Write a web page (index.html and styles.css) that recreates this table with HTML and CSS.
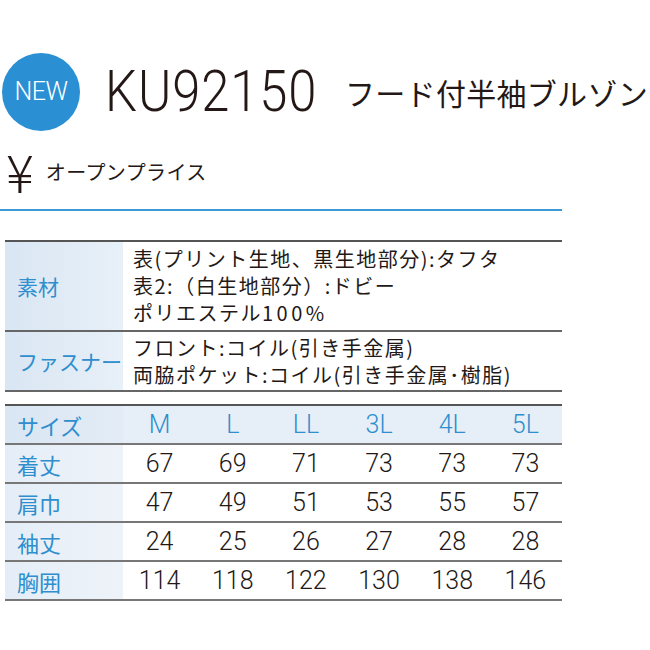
FILE: index.html
```html
<!DOCTYPE html>
<html lang="ja">
<head>
<meta charset="utf-8">
<link rel="stylesheet" href="styles.css">
</head>
<body>
<div class="page">
  <header class="head">
    <div class="badge">NEW</div>
    <div class="code"><span class="code-in">KU92150</span></div>
    <div class="name">フード付半袖ブルゾン</div>
  </header>
  <div class="price">
    <span class="yen">¥</span>
    <span class="price-text">オープンプライス</span>
  </div>
  <div class="rule"></div>

  <table class="spec">
    <tr class="r1">
      <th>素材</th>
      <td>
        <div class="ln">表(プリント生地、黒生地部分):タフタ</div>
        <div class="ln">表2:（白生地部分）:ドビー</div>
        <div class="ln">ポリエステル<span class="pct">100%</span></div>
      </td>
    </tr>
    <tr class="r2">
      <th>ファスナー</th>
      <td>
        <div class="ln">フロント:コイル(引き手金属)</div>
        <div class="ln">両脇ポケット:コイル(引き手金属･樹脂)</div>
      </td>
    </tr>
  </table>

  <table class="size">
    <tr class="hdr">
      <th>サイズ</th><td>M</td><td>L</td><td>LL</td><td>3L</td><td>4L</td><td>5L</td>
    </tr>
    <tr>
      <th>着丈</th><td>67</td><td>69</td><td>71</td><td>73</td><td>73</td><td>73</td>
    </tr>
    <tr>
      <th>肩巾</th><td>47</td><td>49</td><td>51</td><td>53</td><td>55</td><td>57</td>
    </tr>
    <tr>
      <th>袖丈</th><td>24</td><td>25</td><td>26</td><td>27</td><td>28</td><td>28</td>
    </tr>
    <tr>
      <th>胸囲</th><td>114</td><td>118</td><td>122</td><td>130</td><td>138</td><td>146</td>
    </tr>
  </table>
</div>
</body>
</html>
```

FILE: styles.css
```css
html, body {
  margin: 0;
  padding: 0;
  background: #fff;
}
body {
  font-family: "Noto Sans CJK JP", "Noto Sans", sans-serif;
  color: #231815;
}
.page {
  width: 650px;
  height: 650px;
  overflow: hidden;
}
.head {
  display: flex;
  align-items: center;
  padding: 53px 0 0 2px;
  height: 77px;
  white-space: nowrap;
}
.badge {
  width: 78px;
  height: 78px;
  border-radius: 50%;
  background: #2a8fd3;
  color: #fff;
  font-family: Roboto, "Noto Sans", sans-serif;
  font-weight: 300;
  font-size: 25px;
  display: flex;
  align-items: center;
  justify-content: center;
  letter-spacing: -0.5px;
  flex: none;
}
.code {
  width: 210px;
  margin-left: 25px;
  flex: none;
  line-height: 1;
}
.code-in {
  display: inline-block;
  font-family: Roboto, "Noto Sans", sans-serif;
  font-weight: 300;
  font-size: 57px;
  letter-spacing: 1px;
  color: #231815;
  transform: scaleX(0.89);
  transform-origin: left center;
}
.name {
  font-size: 30px;
  margin-left: 30px;
  line-height: 1;
  letter-spacing: 0.3px;
  flex: none;
}
.price {
  display: flex;
  align-items: center;
  height: 44px;
  margin-top: 19px;
  padding-left: 6px;
}
.yen {
  font-family: "Noto Sans CJK JP", sans-serif;
  font-weight: 300;
  font-size: 52px;
  line-height: 1;
}
.price-text {
  font-size: 20px;
  margin-left: 12px;
  letter-spacing: 0.4px;
}
.rule {
  width: 562px;
  height: 2px;
  background: #3c9ad8;
  margin-top: 16px;
}
table {
  border-collapse: collapse;
  margin-left: 5px;
  width: 557px;
}
th {
  text-align: left;
  font-weight: 400;
  color: #2e8ece;
  padding: 0 0 0 12px;
  background: linear-gradient(to right, #d9e6f3, #e8f0f8);
  width: 106px;
}
.spec {
  margin-top: 29px;
  border-top: 2px solid #555;
}
.spec tr {
  border-bottom: 2px solid #666;
}
.spec th {
  font-size: 21px;
}
.spec td {
  font-size: 20px;
  padding: 2px 0 2px 10px;
  letter-spacing: 1.5px;
  white-space: nowrap;
}
.spec .ln {
  height: 27px;
  line-height: 27px;
}
.spec .r1 td {
  padding: 3px 0 4px 10px;
}
.pct {
  letter-spacing: 3.5px;
}
.size {
  margin-top: 12px;
  border-top: 2px solid #555;
  table-layout: fixed;
}
.size tr {
  height: 39px;
  border-bottom: 2px solid #777;
}
.size th {
  font-size: 22px;
  background: linear-gradient(to right, #e4edf7, #eef3f9);
  width: 106px;
}
.size td {
  text-align: center;
  font-family: Roboto, "Noto Sans", sans-serif;
  font-weight: 300;
  font-size: 25px;
  color: #231815;
  padding: 0;
}
.size .hdr {
  height: 39px;
  background: #e6eef7;
}
.size .hdr th {
  background: linear-gradient(to right, #d9e6f3, #e3ecf6);
}
.size .hdr td {
  color: #2e8ece;
}
```
